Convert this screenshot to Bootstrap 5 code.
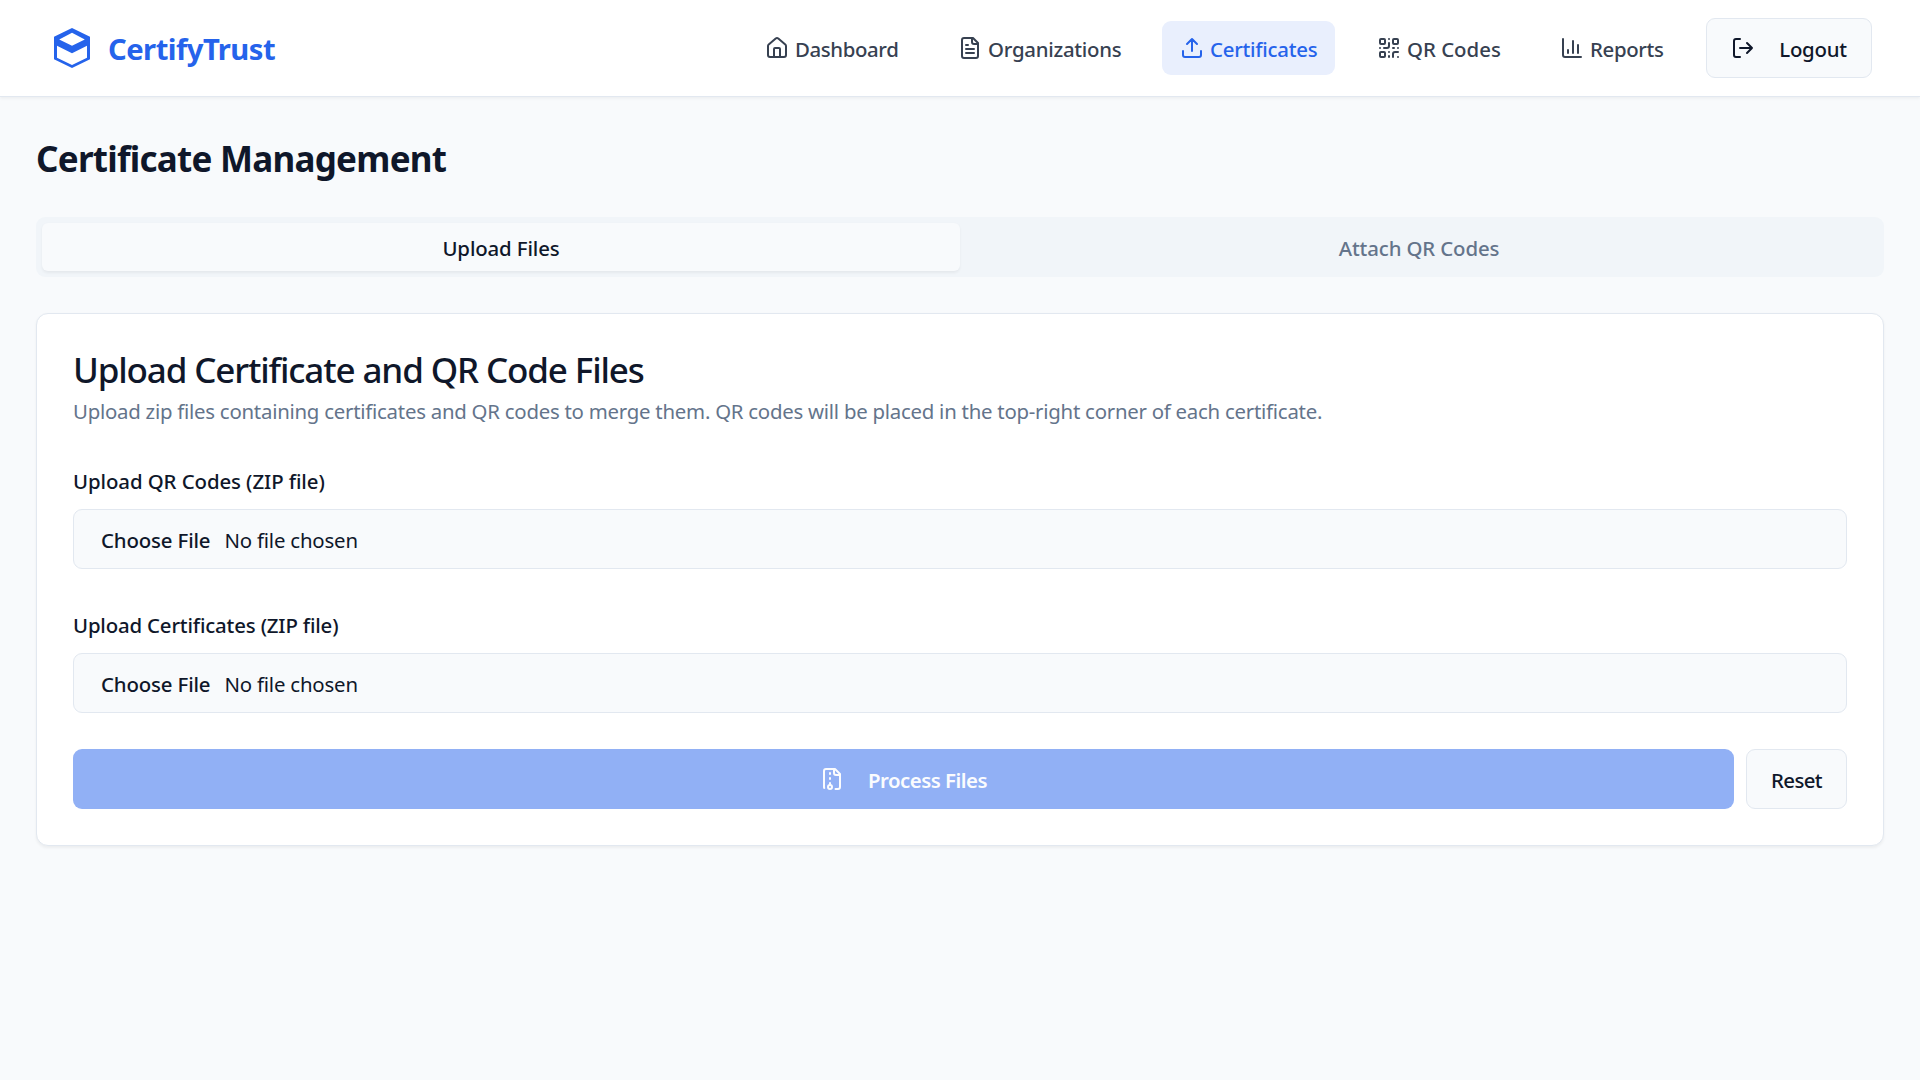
<!DOCTYPE html>
<html lang="en">
<head>
<meta charset="utf-8">
<meta name="viewport" content="width=device-width, initial-scale=1">
<title>CertifyTrust</title>
<link href="https://cdn.jsdelivr.net/npm/bootstrap@5.3.0/dist/css/bootstrap.min.css" rel="stylesheet">
<style>
body{font-family:"Noto Sans","Open Sans",sans-serif;font-size:20.4px;line-height:30px;background:#f8fafc;color:#0f172a}
.ico{width:24px;height:24px;flex:none;fill:none;stroke:currentColor;stroke-width:2;stroke-linecap:round;stroke-linejoin:round}
.topbar{height:97px;padding:0 48px;background:#fff;border-bottom:1px solid #e2e8f0;box-shadow:0 1.5px 3px rgba(0,0,0,.05)}
.brand-mark{width:48px;height:48px;fill:#2563eb}
.brand-name{font-size:29.2px;font-weight:700;color:#2563eb;letter-spacing:-.52px;line-height:36px;padding-top:2px}
.medium{font-weight:500;letter-spacing:-.15px}
.label-text{padding-top:2px;white-space:nowrap}
.menu{gap:24px}
.menu .nav-link{display:flex;align-items:center;height:54px;gap:6px;padding:0 18px;border-radius:9px;color:#374151;font-weight:500}
.menu .nav-link.active{background:#e9effd;color:#2563eb}
.w-dash{width:103px;letter-spacing:-.38px}
.w-org{width:132px;letter-spacing:-.26px}
.w-cert{width:107px;letter-spacing:-.26px}
.w-qr{width:93px}
.w-rep{width:74px;letter-spacing:-.35px}
.w-out{width:68px;letter-spacing:-.28px}
.outline-btn{height:60px;background:#f8fafc;border:1px solid #e2e8f0;border-radius:9px;color:#0f172a;font-size:20.4px;font-weight:500;line-height:30px}
.logout{width:166px;padding:0 24px;gap:24px}
.page{padding:36px}
.page-title{font-size:35px;font-weight:700;line-height:52px;letter-spacing:-.74px;margin-bottom:32px}
.tabset{height:60px;padding:6px;background:#f1f5f9;border-radius:9px;color:#64748b;font-weight:500}
.tabset .nav-link{height:48px;padding:0;border-radius:6px;color:#64748b;letter-spacing:-.13px}
.tabset .nav-link.active{background:#f8fafc;color:#0f172a;box-shadow:0 1.5px 3px rgba(0,0,0,.05)}
.panel{margin-top:36px;padding:36px;border:1px solid #e2e8f0;border-radius:12px;background:#fff;box-shadow:0 1.5px 3px rgba(0,0,0,.05)}
.panel-title{font-size:35px;font-weight:500;line-height:36px;letter-spacing:-1.13px;padding-top:2px;margin-bottom:8px}
.panel-note{color:#64748b;letter-spacing:-.25px;line-height:30px;margin-bottom:45px}
.field-name{font-weight:500;line-height:21px;margin:0 0 17px;white-space:nowrap;display:block;letter-spacing:-.08px}
.file-box{height:60px;padding:0 27px;gap:14px;border:1px solid #e2e8f0;border-radius:9px;background:#f8fafc;color:#0f172a;font-size:20.4px;line-height:30px}
.none-chosen{letter-spacing:-.19px}
.field-gap{margin-top:46px}
.field-gap.long{letter-spacing:-.17px}
.actions{margin-top:36px;gap:12px}
.process{height:60px;border:0;border-radius:9px;background:#91b0f5;color:#fbfcfe;font-size:20.4px;font-weight:600;gap:24px}
.process .label-text{letter-spacing:-.5px}
.reset{width:101px;letter-spacing:-.65px}
</style>
<script src="https://cdn.jsdelivr.net/npm/bootstrap@5.3.0/dist/js/bootstrap.bundle.min.js"></script>
</head>
<body>
<header class="topbar d-flex align-items-center justify-content-between">
  <a href="#" class="d-flex align-items-center text-decoration-none gap-2">
    <svg class="brand-mark" viewBox="0 0 24 24"><path fill-rule="evenodd" d="M12 2 3 6.35v11.3L12 22l9-4.35V6.35zM12 4.4l6.4 3.35L12 10.9 5.6 7.75zM4.5 10.9 12 14.6l7.500-3.7V16.900L12 20.500l-7.500-3.600z"/></svg>
    <span class="brand-name ms-1">CertifyTrust</span>
  </a>
  <div class="d-flex align-items-center menu">
    <nav class="nav menu flex-nowrap">
      <a class="nav-link" href="#"><svg class="ico" viewBox="0 0 24 24"><path d="M15 21v-8a1 1 0 0 0-1-1h-4a1 1 0 0 0-1 1v8M3 10a2 2 0 0 1 .709-1.528l7-5.999a2 2 0 0 1 2.582 0l7 5.999A2 2 0 0 1 21 10v9a2 2 0 0 1-2 2H5a2 2 0 0 1-2-2z"/></svg><span class="label-text w-dash">Dashboard</span></a>
      <a class="nav-link" href="#"><svg class="ico" viewBox="0 0 24 24"><path d="M15 2H6a2 2 0 0 0-2 2v16a2 2 0 0 0 2 2h12a2 2 0 0 0 2-2V7ZM14 2v4a2 2 0 0 0 2 2h4M10 9H8M16 13H8M16 17H8"/></svg><span class="label-text w-org">Organizations</span></a>
      <a class="nav-link active" href="#"><svg class="ico" viewBox="0 0 24 24"><path d="M21 15v4a2 2 0 0 1-2 2H5a2 2 0 0 1-2-2v-4M17 8l-5-5-5 5M12 3v12"/></svg><span class="label-text w-cert">Certificates</span></a>
      <a class="nav-link" href="#"><svg class="ico" viewBox="0 0 24 24"><rect width="5" height="5" x="3" y="3" rx="1"/><rect width="5" height="5" x="16" y="3" rx="1"/><rect width="5" height="5" x="3" y="16" rx="1"/><path d="M21 16h-3a2 2 0 0 0-2 2v3M21 21v.01M12 7v3a2 2 0 0 1-2 2H7M3 12h.01M12 3h.01M12 16v.01M16 12h1M21 12v.01M12 21v-1"/></svg><span class="label-text w-qr">QR Codes</span></a>
      <a class="nav-link" href="#"><svg class="ico" viewBox="0 0 24 24"><path d="M3 3v16a2 2 0 0 0 2 2h16M18 17V9M13 17V5M8 17v-3"/></svg><span class="label-text w-rep">Reports</span></a>
    </nav>
    <button type="button" class="btn outline-btn logout d-flex align-items-center"><svg class="ico" viewBox="0 0 24 24"><path d="M9 21H5a2 2 0 0 1-2-2V5a2 2 0 0 1 2-2h4M16 17l5-5-5-5M21 12H9"/></svg><span class="label-text w-out">Logout</span></button>
  </div>
</header>
<main class="page">
  <h1 class="page-title">Certificate Management</h1>
  <div class="tabset nav nav-pills nav-fill flex-nowrap">
    <a class="nav-link active w-50 d-flex align-items-center justify-content-center" href="#"><span class="label-text">Upload Files</span></a>
    <a class="nav-link w-50 d-flex align-items-center justify-content-center" href="#"><span class="label-text">Attach QR Codes</span></a>
  </div>
  <section class="panel">
    <h2 class="panel-title">Upload Certificate and QR Code Files</h2>
    <p class="panel-note">Upload zip files containing certificates and QR codes to merge them. QR codes will be placed in the top-right corner of each certificate.</p>
    <span class="field-name">Upload QR Codes (ZIP file)</span>
    <label class="file-box d-flex align-items-center"><input type="file" class="d-none"><span class="label-text medium">Choose File</span><span class="label-text none-chosen">No file chosen</span></label>
    <span class="field-name field-gap long">Upload Certificates (ZIP file)</span>
    <label class="file-box d-flex align-items-center"><input type="file" class="d-none"><span class="label-text medium">Choose File</span><span class="label-text none-chosen">No file chosen</span></label>
    <div class="actions d-flex">
      <button type="button" class="process flex-grow-1 d-flex align-items-center justify-content-center"><svg class="ico" viewBox="0 0 24 24"><path d="M10 12v-1M10 18v-2M10 7V6M14 2v4a2 2 0 0 0 2 2h4M15.500 22H18a2 2 0 0 0 2-2V7l-5-5H6a2 2 0 0 0-2 2v16a2 2 0 0 0 .274 1.010"/><circle cx="10" cy="20" r="2"/></svg><span class="label-text">Process Files</span></button>
      <button type="button" class="btn outline-btn reset p-0"><span class="label-text d-block">Reset</span></button>
    </div>
  </section>
</main>
</body>
</html>
